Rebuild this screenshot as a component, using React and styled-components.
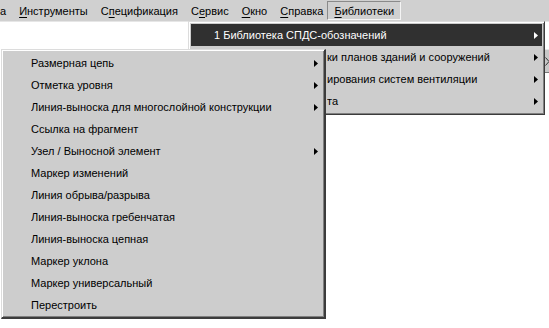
import React from "react";
import styled, { createGlobalStyle } from "styled-components";

const Global = createGlobalStyle`
  html, body { margin: 0; padding: 0; background: #ffffff; }
  body { font-family: "Liberation Sans", Arial, sans-serif; font-size: 11px; color: #000; }
`;

const Page = styled.div`
  position: relative;
  width: 549px;
  height: 328px;
  overflow: hidden;
  background: #ffffff;
`;

const MenuBar = styled.div`
  display: flex;
  align-items: center;
  height: 22px;
  background: #d0d0d0;
  border-bottom: 1px solid #e6e6e6;
  box-sizing: border-box;
  margin-left: -6px;
  gap: 1px;
`;

const BarItem = styled.div`
  height: 19px;
  display: flex;
  align-items: center;
  padding: 0 6px;
  box-sizing: border-box;
  white-space: nowrap;
  ${(p) =>
    p.$pressed &&
    `
    border: 1px solid;
    border-color: #8a8a8a #f4f4f4 #f4f4f4 #8a8a8a;
    margin-left: -3px;
    padding: 0 6px 0 6px;
  `}
`;

const U = styled.span`
  text-decoration: underline;
  text-underline-offset: 2px;
`;

const Popup = styled.div`
  position: absolute;
  background: #cdcdcd;
  box-sizing: border-box;
  border: 1px solid;
  border-color: #dcdcdc #3c3c3c #3c3c3c #dcdcdc;
  box-shadow: inset 1px 1px 0 #ffffff, inset -1px -1px 0 #808080;
  padding: 2px;
  display: flex;
  flex-direction: column;
`;

const LibMenu = styled(Popup)`
  left: 188px;
  top: 21px;
  width: 357px;
  z-index: 1;
`;

const ToolMenu = styled(Popup)`
  left: 1px;
  top: 49px;
  width: 325px;
  z-index: 2;
  border-right-width: 2px;
  border-bottom-width: 2px;
  padding: 2px 2px 1px 2px;
`;

const Row = styled.div`
  display: flex;
  align-items: center;
  height: 22px;
  padding: 0 ${(p) => p.$padRight}px 0 ${(p) => p.$padLeft}px;
  white-space: nowrap;
  overflow: hidden;
  background: ${(p) => (p.$active ? "#303030" : "transparent")};
  color: ${(p) => (p.$active ? "#ffffff" : "#000000")};
`;

const Label = styled.span`
  flex: 1;
  overflow: hidden;
`;

const Arrow = styled.svg`
  flex: none;
  width: 4px;
  height: 7px;
`;

const EdgeStub = styled.div`
  position: absolute;
  left: 543px;
  top: 49px;
  width: 10px;
  height: 24px;
  background: #c8c8c8;
  border-top: 1px solid #e8e8e8;
  border-bottom: 1px solid #7a7a7a;
  box-sizing: border-box;
  display: flex;
  align-items: center;
  padding-left: 2px;
`;

const Chev = styled.svg`
  width: 5px;
  height: 9px;
`;

function SubArrow({ color }) {
  return (
    <Arrow viewBox="0 0 4 7">
      <polygon points="0,0 4,3.5 0,7" fill={color} />
    </Arrow>
  );
}

const toolItems = [
  { t: "Размерная цепь", sub: true },
  { t: "Отметка уровня", sub: true },
  { t: "Линия-выноска для многослойной конструкции", sub: true },
  { t: "Ссылка на фрагмент" },
  { t: "Узел / Выносной элемент", sub: true },
  { t: "Маркер изменений" },
  { t: "Линия обрыва/разрыва" },
  { t: "Линия-выноска гребенчатая" },
  { t: "Линия-выноска цепная" },
  { t: "Маркер уклона" },
  { t: "Маркер универсальный" },
  { t: "Перестроить" },
];

const hiddenLibRows = [
  "ки планов зданий и сооружений",
  "ирования систем вентиляции",
  "та",
];

export default function App() {
  return (
    <Page>
      <Global />
      <MenuBar>
        <BarItem>а</BarItem>
        <BarItem>
          <U>И</U>нструменты
        </BarItem>
        <BarItem>
          С<U>п</U>ецификация
        </BarItem>
        <BarItem>
          С<U>е</U>рвис
        </BarItem>
        <BarItem>
          <U>О</U>кно
        </BarItem>
        <BarItem>
          <U>С</U>правка
        </BarItem>
        <BarItem $pressed>
          <U>Б</U>иблиотеки
        </BarItem>
      </MenuBar>

      <EdgeStub>
        <Chev viewBox="0 0 5 9">
          <polyline points="0.5,0.5 4,4.5 0.5,8.5" fill="none" stroke="#333" strokeWidth="1" />
        </Chev>
      </EdgeStub>

      <LibMenu>
        <Row $active $padLeft={23} $padRight={4}>
          <Label>
            <U>1</U> Библиотека СПДС-обозначений
          </Label>
          <SubArrow color="#ffffff" />
        </Row>
        {hiddenLibRows.map((t) => (
          <Row key={t} $padLeft={136} $padRight={4}>
            <Label>{t}</Label>
            <SubArrow color="#000000" />
          </Row>
        ))}
      </LibMenu>

      <ToolMenu>
        {toolItems.map((it) => (
          <Row key={it.t} $padLeft={27} $padRight={4}>
            <Label>{it.t}</Label>
            {it.sub && <SubArrow color="#000000" />}
          </Row>
        ))}
      </ToolMenu>
    </Page>
  );
}
